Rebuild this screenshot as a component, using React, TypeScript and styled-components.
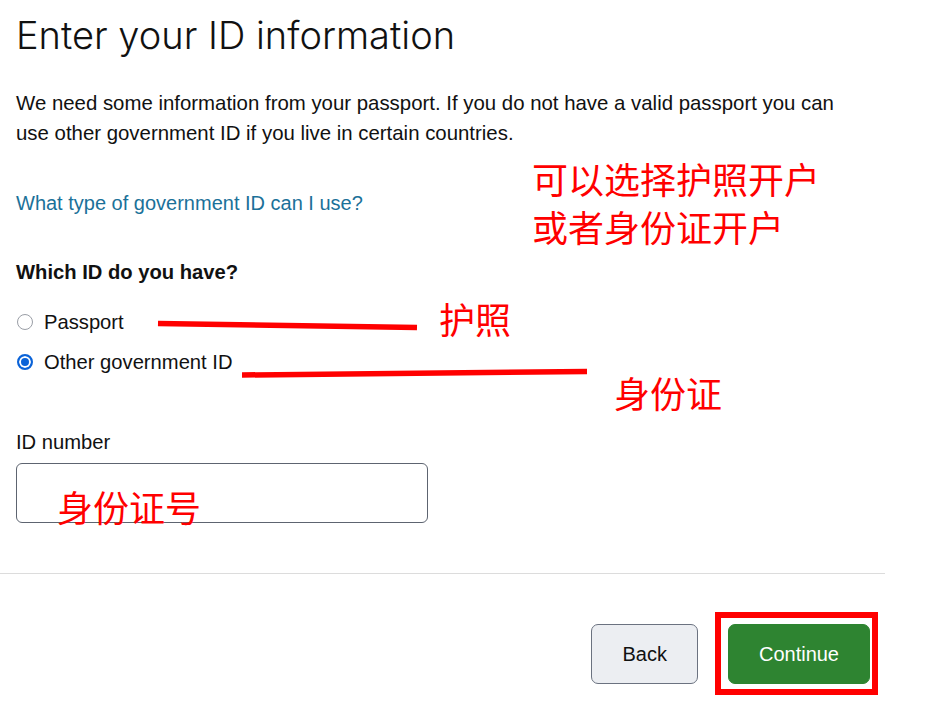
import styled, { createGlobalStyle } from "styled-components";

const GlobalStyle = createGlobalStyle`
  body {
    margin: 0;
    background: #ffffff;
    font-family: "Liberation Sans", Arial, sans-serif;
    color: #111111;
  }
`;

const Page = styled.div`
  position: relative;
  width: 885px;
  min-height: 703px;
`;

const Content = styled.div`
  padding: 13px 16px 0 16px;
`;

const Title = styled.h1`
  margin: 0;
  font-family: "Inter", "Noto Sans", sans-serif;
  font-weight: 300;
  font-size: 38px;
  line-height: 44px;
  color: #111111;
`;

const Intro = styled.p`
  margin: 31px 0 0 0;
  font-size: 20.4px;
  line-height: 30px;
  max-width: 850px;
`;

const HelpLink = styled.a`
  display: block;
  margin-top: 40px;
  font-size: 20px;
  line-height: 30px;
  color: #1b7199;
  text-decoration: none;
`;

const Fieldset = styled.fieldset`
  margin: 39px 0 0 0;
  padding: 0;
  border: none;
`;

const Legend = styled.legend`
  padding: 0;
  font-size: 20.2px;
  line-height: 30px;
  font-weight: 700;
`;

const RadioList = styled.div`
  display: flex;
  flex-direction: column;
  margin-top: 15px;
`;

const RadioRow = styled.label`
  display: flex;
  align-items: center;
  gap: 11px;
  height: 40px;
  font-size: 20.2px;
  cursor: pointer;
`;

const Radio = styled.input`
  appearance: none;
  box-sizing: border-box;
  width: 16px;
  height: 16px;
  margin: 0 0 0 1px;
  border-radius: 50%;
  border: 1px solid #9a9ea6;
  background: #ffffff;

  &:checked {
    border: 2px solid #0b63d8;
    background: #0b63d8;
    box-shadow: inset 0 0 0 2px #ffffff;
  }
`;

const FieldLabel = styled.label`
  display: block;
  margin-top: 45px;
  font-size: 20.2px;
  line-height: 30px;
`;

const TextInput = styled.input`
  display: block;
  box-sizing: border-box;
  margin-top: 6px;
  width: 412px;
  height: 60px;
  border: 1px solid #5d6470;
  border-radius: 6px;
  padding: 0 14px;
  font-size: 20px;
  font-family: inherit;
`;

const Footer = styled.div`
  margin-top: 50px;
  border-top: 1px solid #dcdcdc;
  padding: 50px 15px 0 0;
  display: flex;
  justify-content: flex-end;
  gap: 30px;
`;

const Button = styled.button<{ $primary?: boolean }>`
  height: 60px;
  box-sizing: border-box;
  padding: 0 30px;
  border-radius: 7px;
  font-family: "Liberation Sans", Arial, sans-serif;
  font-size: 20px;
  cursor: pointer;
  border: 1px solid ${({ $primary }) => ($primary ? "#2e8431" : "#6b7280")};
  background: ${({ $primary }) => ($primary ? "#2e8431" : "#eceef2")};
  color: ${({ $primary }) => ($primary ? "#ffffff" : "#111111")};
  min-width: ${({ $primary }) => ($primary ? "142px" : "106px")};
`;

const Highlight = styled.span`
  position: relative;
  display: inline-flex;
`;

const HighlightBox = styled.span`
  position: absolute;
  top: -12px;
  bottom: -11px;
  left: -13px;
  right: -8px;
  border: 6px solid #ff0000;
  pointer-events: none;
`;

const Note = styled.div<{ $x: number; $y: number }>`
  position: absolute;
  left: ${({ $x }) => $x}px;
  top: ${({ $y }) => $y}px;
  font-family: "Noto Sans CJK SC", sans-serif;
  font-size: 36px;
  line-height: 48px;
  color: #ff0000;
  white-space: nowrap;
  pointer-events: none;
`;

const Strokes = styled.svg`
  position: absolute;
  left: 0;
  top: 0;
  pointer-events: none;
`;

export default function App() {
  return (
    <>
      <GlobalStyle />
      <Page>
        <Content>
          <Title>Enter your ID information</Title>
          <Intro>
            We need some information from your passport. If you do not have a
            valid passport you can use other government ID if you live in
            certain countries.
          </Intro>
          <HelpLink href="#">What type of government ID can I use?</HelpLink>
          <Fieldset>
            <Legend>Which ID do you have?</Legend>
            <RadioList>
              <RadioRow>
                <Radio type="radio" name="idType" value="passport" />
                Passport
              </RadioRow>
              <RadioRow>
                <Radio type="radio" name="idType" value="other" defaultChecked />
                Other government ID
              </RadioRow>
            </RadioList>
          </Fieldset>
          <FieldLabel htmlFor="idNumber">ID number</FieldLabel>
          <TextInput id="idNumber" type="text" />
        </Content>
        <Footer>
          <Button>Back</Button>
          <Highlight>
            <Button $primary>Continue</Button>
            <HighlightBox />
          </Highlight>
        </Footer>

        <Strokes width="929" height="703">
          <line x1="158" y1="323.5" x2="417" y2="327.5" stroke="#ff0000" strokeWidth="5.5" />
          <line x1="242" y1="375" x2="587" y2="371.5" stroke="#ff0000" strokeWidth="5.5" />
        </Strokes>
        <Note $x={532} $y={154}>
          可以选择护照开户
          <br />
          或者身份证开户
        </Note>
        <Note $x={439} $y={294}>护照</Note>
        <Note $x={614} $y={368}>身份证</Note>
        <Note $x={57} $y={482}>身份证号</Note>
      </Page>
    </>
  );
}
